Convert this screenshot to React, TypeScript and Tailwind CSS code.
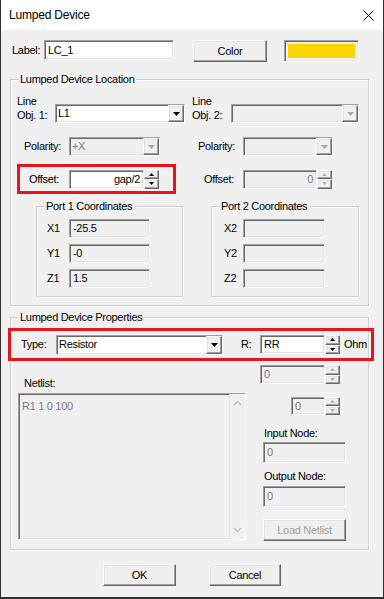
import React from "react";

const sunken =
  "border border-t-[#a0a0a0] border-l-[#a0a0a0] border-r-white border-b-white shadow-[inset_1px_1px_0_#696969,inset_-1px_-1px_0_#e3e3e3]";
const raised =
  "border border-t-white border-l-white border-r-[#696969] border-b-[#696969] shadow-[inset_-1px_-1px_0_#a0a0a0,inset_1px_1px_0_#e3e3e3] bg-[#f0f0f0]";

function DownArrow({ color }: { color: string }) {
  return (
    <svg width="7" height="4" viewBox="0 0 7 4">
      <polygon points="0,0 7,0 3.5,4" fill={color} />
    </svg>
  );
}

function Combo({
  cls,
  text,
  disabled,
}: {
  cls: string;
  text?: string;
  disabled?: boolean;
}) {
  return (
    <div className={`${sunken} ${cls} flex ${disabled ? "bg-[#f0f0f0]" : "bg-white"}`}>
      <div
        className={`flex-1 flex items-center pl-[2px] ${disabled ? "text-[#7a7a7a]" : "text-black"}`}
      >
        {text}
      </div>
      <div className={`${raised} w-[16px] flex items-center justify-center`}>
        <DownArrow color={disabled ? "#a8a8a8" : "#000"} />
      </div>
    </div>
  );
}

function SpinBtns({ disabled }: { disabled?: boolean }) {
  const c = disabled ? "#b0b0b0" : "#000";
  return (
    <div className="flex flex-col w-[15px] h-full">
      <div className={`${raised} flex-1 flex items-center justify-center`}>
        <svg width="5" height="3" viewBox="0 0 5 3">
          <polygon points="0,3 5,3 2.5,0" fill={c} />
        </svg>
      </div>
      <div className={`${raised} flex-1 flex items-center justify-center`}>
        <svg width="5" height="3" viewBox="0 0 5 3">
          <polygon points="0,0 5,0 2.5,3" fill={c} />
        </svg>
      </div>
    </div>
  );
}

function Group({
  title,
  cls,
  children,
}: {
  title: string;
  cls: string;
  children?: React.ReactNode;
}) {
  return (
    <div
      className={`relative border border-[#cdcdcd] shadow-[inset_1px_1px_0_#fff,1px_1px_0_#fff] ${cls}`}
    >
      <span className="absolute left-[7px] top-[-8px] px-[2px] bg-[#f0f0f0] leading-[14px] whitespace-nowrap">
        {title}
      </span>
      {children}
    </div>
  );
}

export default function App() {
  return (
    <div className="w-[384px] h-[599px] bg-[#f0f0f0] border-x border-b-2 border-[#2f2f2f] flex flex-col text-[11px] tracking-[-0.3px] text-black font-['Liberation_Sans',Arial,sans-serif] overflow-hidden">
      {/* Title bar */}
      <div className="h-[30px] bg-white flex items-center justify-between pl-[8px] pr-[9px] shrink-0">
        <span className="text-[12px] tracking-[-0.2px]">Lumped Device</span>
        <svg width="11" height="11" viewBox="0 0 11 11">
          <path d="M0.5 0.5 L10.5 10.5 M10.5 0.5 L0.5 10.5" stroke="#000" strokeWidth="1" />
        </svg>
      </div>

      {/* Label row */}
      <div className="mt-[10px] flex items-start h-[22px]">
        <span className="ml-[11px] w-[32px] leading-[20px]">Label:</span>
        <div className={`${sunken} bg-white w-[130px] h-[20px] flex items-center pl-[3px]`}>LC_1</div>
        <div className={`${raised} ml-[19px] w-[74px] h-[22px] flex items-center justify-center`}>Color</div>
        <div className={`${sunken} ml-[17px] w-[75px] h-[22px] p-[3px] bg-[#f0f0f0]`}>
          <div className="w-full h-full bg-[#ffd500]" />
        </div>
      </div>

      {/* Lumped Device Location */}
      <Group title="Lumped Device Location" cls="mt-[17px] ml-[9px] w-[359px] h-[227px] shrink-0">
        <div className="mt-[14px] flex items-start">
          <div className="ml-[6px] w-[38px] leading-[14px]">
            <div>Line</div>
            <div>Obj. 1:</div>
          </div>
          <div className="mt-[10px]">
            <Combo cls="w-[130px] h-[19px]" text="L1" />
          </div>
          <div className="ml-[7px] w-[39px] leading-[14px]">
            <div>Line</div>
            <div>Obj. 2:</div>
          </div>
          <div className="mt-[10px]">
            <Combo cls="w-[128px] h-[19px]" disabled />
          </div>
        </div>

        <div className="mt-[14px] flex items-center h-[19px]">
          <span className="ml-[13px] w-[45px]">Polarity:</span>
          <Combo cls="w-[91px] h-[19px]" text="+X" disabled />
          <span className="ml-[38px] w-[45px]">Polarity:</span>
          <Combo cls="w-[90px] h-[19px]" disabled />
        </div>

        <div className="mt-[8px] flex items-center">
          <div className="ml-[6px] w-[159px] h-[30px] border-[3px] border-[#e8141c] flex items-center">
            <span className="ml-[9px] w-[40px]">Offset:</span>
            <div className={`${sunken} bg-white w-[75px] h-[19px] flex items-center justify-end pr-[3px]`}>gap/2</div>
            <div className="h-[19px]">
              <SpinBtns />
            </div>
          </div>
          <span className="ml-[28px] w-[39px]">Offset:</span>
          <div className={`${sunken} bg-[#f0f0f0] w-[74px] h-[19px] flex items-center justify-end pr-[3px] text-[#7a7a7a]`}>0</div>
          <div className="h-[19px] w-[16px]">
            <SpinBtns disabled />
          </div>
        </div>

        <div className="mt-[12px] flex items-start">
          <Group title="Port 1 Coordinates" cls="ml-[25px] w-[147px] h-[91px]">
            <div className="mt-[12px] flex flex-col gap-[6px]">
              {[
                ["X1", "-25.5"],
                ["Y1", "-0"],
                ["Z1", "1.5"],
              ].map(([l, v]) => (
                <div key={l} className="flex items-center">
                  <span className="ml-[10px] w-[22px]">{l}</span>
                  <div className={`${sunken} w-[81px] h-[19px] flex items-center pl-[3px]`}>{v}</div>
                </div>
              ))}
            </div>
          </Group>
          <Group title="Port 2 Coordinates" cls="ml-[28px] w-[148px] h-[91px]">
            <div className="mt-[12px] flex flex-col gap-[6px]">
              {["X2", "Y2", "Z2"].map((l) => (
                <div key={l} className="flex items-center">
                  <span className="ml-[12px] w-[19px]">{l}</span>
                  <div className={`${sunken} w-[82px] h-[19px]`} />
                </div>
              ))}
            </div>
          </Group>
        </div>
      </Group>

      {/* Lumped Device Properties */}
      <Group title="Lumped Device Properties" cls="mt-[11px] ml-[9px] w-[359px] h-[233px] shrink-0">
        <div className="mt-[10px] ml-[-3px] w-[366px] h-[33px] border-[3px] border-[#e8141c] flex items-center">
          <span className="ml-[10px] w-[35px]">Type:</span>
          <Combo cls="w-[167px] h-[20px]" text="Resistor" />
          <span className="ml-[18px] w-[19px]">R:</span>
          <div className={`${sunken} bg-white w-[65px] h-[19px] flex items-center pl-[3px]`}>RR</div>
          <div className="h-[19px]">
            <SpinBtns />
          </div>
          <span className="ml-[4px]">Ohm</span>
        </div>

        <div className="flex items-start">
          <div className="ml-[7px] flex flex-col">
            <span className="mt-[15px] ml-[6px] leading-[14px]">Netlist:</span>
            <div className={`${sunken} mt-[3px] w-[228px] h-[147px] flex bg-[#f0f0f0]`}>
              <div className="flex-1 pl-[3px] pt-[4px] text-[#7a7a7a]">R1 1 0 100</div>
              <div className="w-[16px] flex flex-col items-center justify-between py-[6px] bg-[#f0f0f0] border-l border-[#e6e6e6]">
                <svg width="9" height="6" viewBox="0 0 9 6">
                  <path d="M1 5 L4.5 1.5 L8 5" stroke="#bfbfbf" strokeWidth="1.3" fill="none" />
                </svg>
                <svg width="9" height="6" viewBox="0 0 9 6">
                  <path d="M1 1 L4.5 4.5 L8 1" stroke="#bfbfbf" strokeWidth="1.3" fill="none" />
                </svg>
              </div>
            </div>
          </div>

          <div className="ml-[14px] flex flex-col">
            <div className="mt-[4px] flex h-[19px]">
              <div className={`${sunken} w-[65px] h-[19px] flex items-center pl-[3px] text-[#7a7a7a]`}>0</div>
              <SpinBtns disabled />
            </div>
            <div className="mt-[13px] ml-[31px] flex h-[18px]">
              <div className={`${sunken} w-[34px] h-[18px] flex items-center pl-[3px] text-[#7a7a7a]`}>0</div>
              <SpinBtns disabled />
            </div>
            <span className="mt-[11px] ml-[4px] leading-[14px]">Input Node:</span>
            <div className={`${sunken} mt-[2px] ml-[3px] w-[83px] h-[21px] flex items-center pl-[3px] text-[#7a7a7a]`}>0</div>
            <span className="mt-[6px] ml-[4px] leading-[14px]">Output Node:</span>
            <div className={`${sunken} mt-[3px] ml-[3px] w-[83px] h-[21px] flex items-center pl-[3px] text-[#7a7a7a]`}>0</div>
            <div className={`${raised} mt-[12px] ml-[3px] w-[83px] h-[22px] flex items-center justify-center text-[#a0a0a0]`}>
              Load Netlist
            </div>
          </div>
        </div>
      </Group>

      {/* Bottom buttons */}
      <div className="mt-[14px] flex">
        <div className={`${raised} ml-[102px] w-[73px] h-[22px] flex items-center justify-center`}>OK</div>
        <div className={`${raised} ml-[33px] w-[72px] h-[22px] flex items-center justify-center`}>Cancel</div>
      </div>
    </div>
  );
}
